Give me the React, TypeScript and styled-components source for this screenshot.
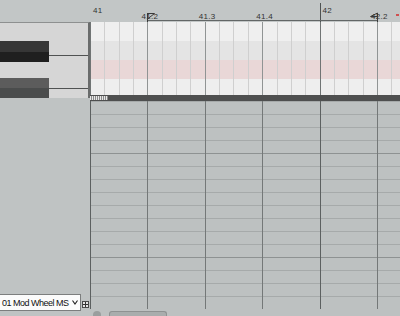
import styled, { createGlobalStyle } from 'styled-components';

const BEAT = 57.4;
const STEP = BEAT / 4;
const BAR = BEAT * 4;

const GlobalStyle = createGlobalStyle`
  html, body { margin: 0; padding: 0; background: #c0c4c4; }
`;

const verticalLines = (beat: string, bar: string) => `
  repeating-linear-gradient(90deg, ${bar} 0 1px, transparent 1px ${BAR}px),
  repeating-linear-gradient(90deg, ${beat} 0 1px, transparent 1px ${BEAT}px)
`;

const Window = styled.div`
  width: 400px;
  height: 316px;
  overflow: hidden;
  display: grid;
  grid-template-columns: 90px 1fr;
  background: #c0c4c4;
  font-family: 'Liberation Sans', Arial, sans-serif;
`;

/* left column: keyboard + controller lane selector */
const LeftPane = styled.div`
  display: flex;
  flex-direction: column;
  background: #bfc3c3;
`;

const RulerCorner = styled.div`
  height: 22px;
  flex: none;
  background: #c2c6c6;
`;

const Keyboard = styled.div`
  height: 76px;
  flex: none;
  box-sizing: border-box;
  border-top: 1px solid #8e9090;
  border-right: 2px solid #6a6c6c;
  background: #d6d6d6;
  display: flex;
  flex-direction: column;
  padding-top: 18px;
`;

const BlackKey = styled.div<{ $shade: 'dark' | 'grey' }>`
  display: flex;
  align-items: flex-start;
  height: ${(p) => (p.$shade === 'dark' ? 21 : 20)}px;
  margin-bottom: ${(p) => (p.$shade === 'dark' ? 16 : 0)}px;

  .cap {
    width: 49px;
    height: 100%;
    flex: none;
    background: ${(p) =>
      p.$shade === 'dark'
        ? 'linear-gradient(#363636 0 50%, #1f1f1f 50% 100%)'
        : 'linear-gradient(#5c5c5c 0 50%, #4a4c4c 50% 100%)'};
  }
  .split {
    flex: 1;
    height: 1px;
    margin-top: ${(p) => (p.$shade === 'dark' ? 14 : 10)}px;
    background: #505252;
  }
`;

const LaneControls = styled.div`
  flex: 1;
  display: flex;
  align-items: flex-end;
  gap: 1px;
  padding-bottom: 5px;
`;

const LaneSelect = styled.div`
  width: 81px;
  height: 17px;
  box-sizing: border-box;
  border: 1px solid #7c7e7e;
  border-left: none;
  background: #fbfbfb;
  display: flex;
  align-items: center;
  justify-content: space-between;
  padding: 0 2px 0 2px;
  font-size: 9px;
  letter-spacing: -0.5px;
  color: #111;
  white-space: nowrap;
`;

const Chevron = styled.svg`
  width: 6px;
  height: 5px;
  flex: none;
`;

const AddLane = styled.div`
  width: 7px;
  height: 7px;
  margin-bottom: 3px;
  box-sizing: border-box;
  border: 1px solid #4a4a4a;
  background: #e4e4e4;
  display: grid;
  place-items: center;
  svg {
    display: block;
  }
`;

/* right column: ruler, piano roll, controller lane */
const RightPane = styled.div`
  display: flex;
  flex-direction: column;
  min-width: 0;
`;

const Ruler = styled.div`
  position: relative;
  height: 22px;
  flex: none;
  display: flex;
  background: #c2c6c6;
`;

const RulerCell = styled.div<{ $bar: boolean; $first: boolean }>`
  width: ${BEAT}px;
  flex: none;
  box-sizing: border-box;
  margin-top: 3px;
  border-left: 1px solid ${(p) => (p.$bar && !p.$first ? '#4e5252' : 'transparent')};
  font-size: 8px;
  line-height: 8px;
  color: #333;
`;

const RulerLabel = styled.div<{ $bar: boolean }>`
  margin-top: ${(p) => (p.$bar ? 4 : 10)}px;
  margin-left: ${(p) => (p.$bar ? 2 : -7)}px;
  letter-spacing: 0.3px;
`;

const LoopRange = styled.div`
  position: absolute;
  left: ${BEAT}px;
  width: ${BEAT * 4}px;
  top: 20px;
  height: 1px;
  background: #626666;
`;

const Locator = styled.svg<{ $x: number }>`
  position: absolute;
  top: 12px;
  left: ${(p) => p.$x}px;
  width: 9px;
  height: 10px;
`;

const EndMark = styled.div`
  position: absolute;
  right: 1px;
  top: 14px;
  width: 3px;
  height: 2px;
  background: #d05050;
`;

const NoteArea = styled.div`
  height: 73px;
  flex: none;
  display: flex;
  flex-direction: column;
`;

const PitchRow = styled.div<{ $bg: string; $h: number }>`
  height: ${(p) => p.$h}px;
  background-color: ${(p) => p.$bg};
  background-image: ${verticalLines('#909494', '#707474')},
    repeating-linear-gradient(90deg, #cfcfcf 0 1px, transparent 1px ${STEP}px);
`;

const Splitter = styled.div`
  height: 6px;
  flex: none;
  background: #4e4f4f;
  display: flex;
  align-items: center;
`;

const SplitHandle = styled.div`
  width: 18px;
  height: 4px;
  background: repeating-linear-gradient(90deg, #e8e8e8 0 1px, #8a8a8a 1px 2px);
`;

const ControllerLane = styled.div`
  flex: 1;
  background-color: #bdc1c1;
  background-image: ${verticalLines('#747878', '#5c6060')},
    repeating-linear-gradient(180deg, transparent 0 52px, #8e9292 52px 53px, transparent 53px 104px),
    repeating-linear-gradient(180deg, transparent 0 12px, #a6aaaa 12px 13px);
  background-position: 0 0, 0 0, 0 0, 0 1px;
`;

const ScrollStrip = styled.div`
  height: 7px;
  flex: none;
  display: flex;
  align-items: flex-end;
  gap: 8px;
  padding-left: 3px;
  background: #bdc1c1;
`;

const ScrollArrow = styled.div`
  width: 8px;
  height: 5px;
  border-radius: 4px 4px 0 0;
  background: #9a9e9e;
`;

const ScrollThumb = styled.div`
  width: 58px;
  height: 5px;
  border-radius: 3px 3px 0 0;
  background: #a9adad;
  border: 1px solid #8e9292;
  border-bottom: none;
  box-sizing: border-box;
`;

const beats = [
  { label: '41', bar: true },
  { label: '41.2', bar: false },
  { label: '41.3', bar: false },
  { label: '41.4', bar: false },
  { label: '42', bar: true },
  { label: '42.2', bar: false },
];

const rows = [
  { bg: '#efefef', h: 19 },
  { bg: '#e4e4e4', h: 19 },
  { bg: '#e9d7d7', h: 19 },
  { bg: '#eeeeee', h: 16 },
];

export default function App() {
  return (
    <Window>
      <GlobalStyle />
      <LeftPane>
        <RulerCorner />
        <Keyboard>
          <BlackKey $shade="dark">
            <div className="cap" />
            <div className="split" />
          </BlackKey>
          <BlackKey $shade="grey">
            <div className="cap" />
            <div className="split" />
          </BlackKey>
        </Keyboard>
        <LaneControls>
          <LaneSelect>
            <span>01 Mod Wheel MS</span>
            <Chevron viewBox="0 0 6 5">
              <path d="M0.5 0.5 L3 4 L5.5 0.5" fill="none" stroke="#222" strokeWidth="1.1" />
            </Chevron>
          </LaneSelect>
          <AddLane>
            <svg width="5" height="5" viewBox="0 0 5 5">
              <path d="M2.5 0 V5 M0 2.5 H5" stroke="#333" strokeWidth="1" />
            </svg>
          </AddLane>
        </LaneControls>
      </LeftPane>

      <RightPane>
        <Ruler>
          {beats.map((b, i) => (
            <RulerCell key={b.label} $bar={b.bar} $first={i === 0}>
              <RulerLabel $bar={b.bar}>{b.label}</RulerLabel>
            </RulerCell>
          ))}
          <LoopRange />
          <Locator $x={BEAT - 0.5} viewBox="0 0 9 10">
            <path d="M0.5 1 V10 M0.5 1.5 H7.5 L0.5 7" fill="none" stroke="#3a3a3a" strokeWidth="1" />
          </Locator>
          <Locator $x={BEAT * 5 - 8.5} viewBox="0 0 9 10">
            <path d="M8.5 1 V10 M8.5 4.5 L1.5 4.5 L8.5 1" fill="none" stroke="#3a3a3a" strokeWidth="1" />
          </Locator>
          <EndMark />
        </Ruler>
        <NoteArea>
          {rows.map((r, i) => (
            <PitchRow key={i} $bg={r.bg} $h={r.h} />
          ))}
        </NoteArea>
        <Splitter>
          <SplitHandle />
        </Splitter>
        <ControllerLane />
        <ScrollStrip>
          <ScrollArrow />
          <ScrollThumb />
        </ScrollStrip>
      </RightPane>
    </Window>
  );
}
